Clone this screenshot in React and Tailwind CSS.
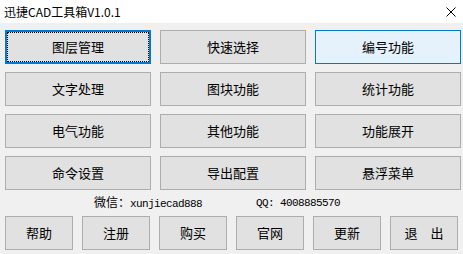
import React from 'react';

const MAIN = [
  ['图层管理', '快速选择', '编号功能'],
  ['文字处理', '图块功能', '统计功能'],
  ['电气功能', '其他功能', '功能展开'],
  ['命令设置', '导出配置', '悬浮菜单'],
];

const BOTTOM = ['帮助', '注册', '购买', '官网', '更新', '退　出'];

const cjk = { fontFamily: '"Noto Sans CJK SC", "Microsoft YaHei", sans-serif' };
const mono = { fontFamily: '"Liberation Mono", "Noto Sans CJK SC", monospace' };

const Btn = ({ label, state, className = '' }) => {
  if (state === 'focus') {
    return (
      <button className={`relative h-[34px] border-2 border-[#0078d7] bg-[#e1e1e1] text-[13px] text-black ${className}`} style={cjk}>
        <span className="absolute inset-0 border border-dotted border-black"></span>
        {label}
      </button>
    );
  }
  if (state === 'hover') {
    return (
      <button className={`h-[34px] border border-[#0078d7] bg-[#e5f1fb] text-[13px] text-black ${className}`} style={cjk}>
        {label}
      </button>
    );
  }
  return (
    <button className={`h-[34px] border border-[#adadad] bg-[#e1e1e1] text-[13px] text-black ${className}`} style={cjk}>
      {label}
    </button>
  );
};

export default function App() {
  return (
    <div className="w-[463px] h-[254px] bg-[#f0f0f0] overflow-hidden flex flex-col">
      <div className="h-[23px] bg-white flex items-center justify-between pl-[4px] pr-[6px]">
        <span className="text-[12px] text-black leading-none" style={cjk}>迅捷CAD工具箱V1.0.1</span>
        <svg width="10" height="10" viewBox="0 0 10 10" className="mr-[1px]">
          <path d="M0.5 0.5 L9.5 9.5 M9.5 0.5 L0.5 9.5" stroke="#000" strokeWidth="1" fill="none" />
        </svg>
      </div>

      <div className="pt-[7px] pl-[5px] grid grid-cols-[146px_146px_146px] gap-x-[9px] gap-y-[8px]">
        {MAIN.flat().map((l, i) => (
          <Btn key={l} label={l} state={i === 0 ? 'focus' : i === 2 ? 'hover' : null} />
        ))}
      </div>

      <div className="h-[26px] flex items-center pl-[94px] text-[11px] tracking-[-0.6px] text-black" style={mono}>
        <span><span style={cjk} className="tracking-normal text-[12px]">微信：</span>xunjiecad888</span>
        <span className="ml-[54px]">QQ: 4008885570</span>
      </div>

      <div className="pl-[5px] flex gap-[9px]">
        {BOTTOM.map(l => (
          <Btn key={l} label={l} className="w-[68px]" />
        ))}
      </div>
    </div>
  );
}
